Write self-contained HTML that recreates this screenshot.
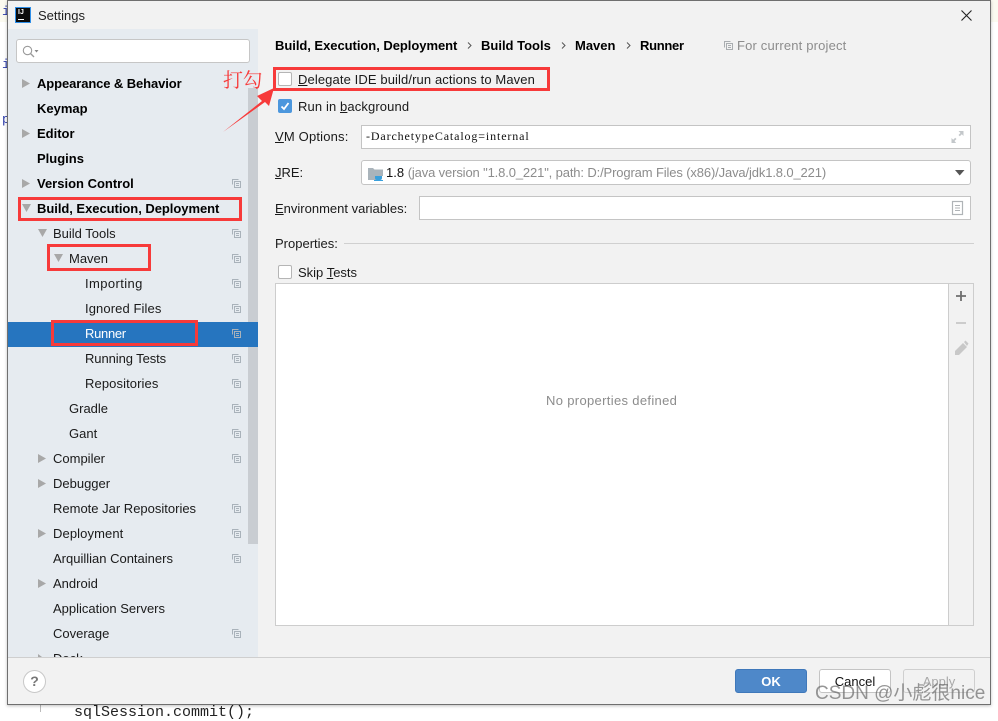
<!DOCTYPE html>
<html><head><meta charset="utf-8">
<style>
html,body{margin:0;padding:0;width:998px;height:712px;overflow:hidden;background:#fff;font-family:"Liberation Sans","Noto Sans CJK SC",sans-serif;font-size:13px;color:#1a1a1a}
div,span.a{position:absolute;box-sizing:border-box}
.t{white-space:nowrap;line-height:16px;height:16px}
.b{font-weight:bold;color:#000}
.u{text-decoration:underline}
.red{border:3px solid #f73a3a}
svg{position:absolute;overflow:visible}
.field{background:#fff;border:1px solid #c4c4c4}
</style></head><body>
<!-- background -->
<div style="left:0;top:0;width:8px;height:22px;background:#fbfaf0"></div>
<div style="left:990px;top:0;width:8px;height:22px;background:#fbfaf0"></div>
<div class="t" style="left:2px;top:4px;color:#2a3aa8;font-family:'Liberation Mono',monospace">i</div>
<div class="t" style="left:2px;top:57px;color:#2a3aa8;font-family:'Liberation Mono',monospace">i</div>
<div class="t" style="left:2px;top:112px;color:#2a3aa8;font-family:'Liberation Mono',monospace">p</div>
<div style="left:40px;top:704px;width:1px;height:8px;background:#bbb"></div>
<div class="t" style="left:74px;top:705px;font-family:'Liberation Mono',monospace;font-size:15px;color:#222">sqlSession.commit();</div>

<!-- dialog -->
<div style="left:7px;top:0;width:984px;height:705px;background:#f2f2f2;border:1px solid #6f6f6f;box-shadow:0 1px 3px rgba(0,0,0,.25)"></div>
<!-- title -->
<div style="left:15px;top:7px;width:16px;height:16px;background:#0b0b0b;border:1px solid #2f8fe8"></div>
<div style="left:18px;top:9px;font:bold 7px/8px 'Liberation Sans',sans-serif;color:#fff">IJ</div>
<div style="left:18px;top:19px;width:6px;height:1px;background:#fff"></div>
<div class="t" style="left:38px;top:8px;color:#222">Settings</div>
<svg style="left:961px;top:10px" width="11" height="11"><path d="M.5.5l10 10M10.500.5l-10 10" stroke="#222" stroke-width="1.100" fill="none"/></svg>

<!-- sidebar -->
<div style="left:8px;top:29px;width:250px;height:628px;background:#e6ebf0"></div>
<div style="left:248px;top:88px;width:10px;height:456px;background:#c9cdd2"></div>
<div style="left:8px;top:322px;width:250px;height:25px;background:#2675bf"></div>
<div style="left:16px;top:39px;width:234px;height:24px;background:#fff;border:1px solid #c6c6c6;border-radius:3px"></div>
<svg style="left:22px;top:45px" width="18" height="13"><circle cx="5.500" cy="5.500" r="4.200" stroke="#9a9a9a" stroke-width="1.100" fill="none"/><path d="M8.500 8.500l3.500 3.500" stroke="#9a9a9a" stroke-width="1.300"/><path d="M12.500 5h4l-2 2.500z" fill="#888"/></svg>

<div class="t b" style="left:37px;top:76px;letter-spacing:-.1px">Appearance &amp; Behavior</div>
<div class="t b" style="left:37px;top:101px">Keymap</div>
<div class="t b" style="left:37px;top:126px">Editor</div>
<div class="t b" style="left:37px;top:151px">Plugins</div>
<div class="t b" style="left:37px;top:176px">Version Control</div>
<div class="t b" style="left:37px;top:201px;letter-spacing:-.04px">Build, Execution, Deployment</div>
<div class="t" style="left:53px;top:226px">Build Tools</div>
<div class="t" style="left:69px;top:251px">Maven</div>
<div class="t" style="left:85px;top:276px;letter-spacing:.4px">Importing</div>
<div class="t" style="left:85px;top:301px;letter-spacing:.1px">Ignored Files</div>
<div class="t" style="left:85px;top:326px;color:#fff;letter-spacing:-.3px">Runner</div>
<div class="t" style="left:85px;top:351px;letter-spacing:-.08px">Running Tests</div>
<div class="t" style="left:85px;top:376px;letter-spacing:.1px">Repositories</div>
<div class="t" style="left:69px;top:401px">Gradle</div>
<div class="t" style="left:69px;top:426px">Gant</div>
<div class="t" style="left:53px;top:451px">Compiler</div>
<div class="t" style="left:53px;top:476px">Debugger</div>
<div class="t" style="left:53px;top:501px">Remote Jar Repositories</div>
<div class="t" style="left:53px;top:526px;letter-spacing:.1px">Deployment</div>
<div class="t" style="left:53px;top:551px">Arquillian Containers</div>
<div class="t" style="left:53px;top:576px">Android</div>
<div class="t" style="left:53px;top:601px">Application Servers</div>
<div class="t" style="left:53px;top:626px">Coverage</div>
<div style="left:53px;top:651px;width:40px;height:6px;overflow:hidden"><div class="t" style="left:0;top:0">Dock</div></div>

<svg style="left:0;top:0" width="60" height="660">
<g fill="#a8a8a8">
<path d="M22 79v9l8-4.500z"/><path d="M22 129v9l8-4.500z"/><path d="M22 179v9l8-4.500z"/>
<path d="M22 204h9l-4.500 8z"/><path d="M38 229h9l-4.500 8z"/><path d="M54 254h9l-4.500 8z"/>
<path d="M38 454v9l8-4.500z"/><path d="M38 479v9l8-4.500z"/><path d="M38 529v9l8-4.500z"/><path d="M38 579v9l8-4.500z"/>
<path d="M38 654v3h4z"/>
</g></svg>

<svg style="left:232px;top:179px" width="10" height="470" fill="none" stroke="#a9b2ba" stroke-width="1">
<defs><g id="c"><path d="M.5 5.500v-5h6M2.500 8.500v-6h6v6z"/><path d="M4 4.500h3M4 6.500h3" /></g></defs>
<use href="#c" y="0"/><use href="#c" y="50"/><use href="#c" y="75"/><use href="#c" y="100"/><use href="#c" y="125"/><use href="#c" y="150"/><use href="#c" y="175"/><use href="#c" y="200"/><use href="#c" y="225"/><use href="#c" y="250"/><use href="#c" y="275"/><use href="#c" y="325"/><use href="#c" y="350"/><use href="#c" y="375"/><use href="#c" y="450"/>
</svg>

<!-- breadcrumbs -->
<div class="t b" style="left:275px;top:38px;letter-spacing:-.04px">Build, Execution, Deployment</div>
<div class="t b" style="left:481px;top:38px">Build Tools</div>
<div class="t b" style="left:575px;top:38px">Maven</div>
<div class="t b" style="left:640px;top:38px;letter-spacing:-.3px">Runner</div>
<svg style="left:467px;top:41px" width="170" height="10" fill="none" stroke="#555" stroke-width="1"><path d="M1 1.500l3 3-3 3M95 1.500l3 3-3 3M160 1.500l3 3-3 3"/></svg>
<svg style="left:724px;top:41px" width="10" height="10" fill="none" stroke="#a9adb0"><path d="M.5 6.500v-6h6M2.500 8.500v-6h6v6z"/><path d="M4 4.500h3M4 6.500h3"/></svg>
<div class="t" style="left:737px;top:38px;color:#8c8c8c;letter-spacing:.17px">For current project</div>

<!-- options -->
<div style="left:278px;top:72px;width:14px;height:14px;background:#fff;border:1px solid #b5b5b5;border-radius:2px"></div>
<div class="t" style="left:298px;top:72px;letter-spacing:.11px"><span class="u">D</span>elegate IDE build/run actions to Maven</div>
<div style="left:278px;top:99px;width:14px;height:14px;background:#4c97dd;border-radius:2px"></div>
<svg style="left:278px;top:99px" width="14" height="14"><path d="M3.500 7.500l2.500 2.500 4.500-6" stroke="#fff" stroke-width="1.800" fill="none"/></svg>
<div class="t" style="left:298px;top:99px;letter-spacing:.12px">Run in <span class="u">b</span>ackground</div>

<div class="t" style="left:275px;top:129px;letter-spacing:.18px"><span class="u">V</span>M Options:</div>
<div class="field" style="left:361px;top:125px;width:610px;height:24px"></div>
<div class="t" style="left:366px;top:128px;font-family:'Liberation Serif',serif;font-size:12px;letter-spacing:.87px;color:#111">-DarchetypeCatalog=internal</div>
<svg style="left:951px;top:130px" width="13" height="14" fill="#c3c7ca"><path d="M7.500 1h5v5l-1.700-1.700-2 2-1.300-1.300 2-2zM.5 13v-5l1.700 1.700 2-2 1.300 1.300-2 2 1.700 2z"/></svg>

<div class="t" style="left:275px;top:165px"><span class="u">J</span>RE:</div>
<div class="field" style="left:361px;top:160px;width:610px;height:25px;border-radius:3px"></div>
<svg style="left:368px;top:167px" width="16" height="14"><path d="M0 1h5l1.500 1.500H15V9H9v4H0z" fill="#aab4bb"/><path d="M7 9h7v2a2 2 0 0 1-2 2H9a2 2 0 0 1-2-2z" fill="#3aa0dc"/><path d="M6 13.500h9" stroke="#3aa0dc"/></svg>
<div class="t" style="left:386px;top:165px;color:#111">1.8 <span style="color:#8c8c8c;letter-spacing:-.135px">(java version "1.8.0_221", path: D:/Program Files (x86)/Java/jdk1.8.0_221)</span></div>
<svg style="left:955px;top:170px" width="10" height="6"><path d="M0 0h9.500L4.700 5.500z" fill="#555"/></svg>

<div class="t" style="left:275px;top:201px"><span class="u">E</span>nvironment variables:</div>
<div class="field" style="left:419px;top:196px;width:552px;height:24px"></div>
<svg style="left:952px;top:201px" width="11" height="14" fill="none" stroke="#b0b4b7"><rect x=".5" y=".5" width="10" height="13" stroke-width="1.200"/><path d="M3 4.500h5M3 7h5M3 9.500h5"/></svg>

<div class="t" style="left:275px;top:236px">Properties:</div>
<div style="left:344px;top:243px;width:630px;height:1px;background:#d0d0d0"></div>

<div style="left:278px;top:265px;width:14px;height:14px;background:#fff;border:1px solid #b5b5b5;border-radius:2px"></div>
<div class="t" style="left:298px;top:265px"><span>Skip</span> <span class="u">T</span>ests</div>

<div style="left:275px;top:283px;width:699px;height:343px;background:#fff;border:1px solid #cdcdcd"></div>
<div style="left:948px;top:284px;width:25px;height:341px;background:#f2f2f2;border-left:1px solid #cdcdcd"></div>
<svg style="left:955px;top:290px" width="14" height="68"><path d="M6 1v10M1 6h10" stroke="#6e6e6e" stroke-width="1.800" fill="none"/><path d="M1 33h10" stroke="#c8c8c8" stroke-width="1.800"/><path d="M0 65v-4l8-8 4 4-8 8z M9 52l1.500-1.500 3 3L12 56z" fill="#c8c8c8"/></svg>
<div class="t" style="left:546px;top:393px;color:#8c8c8c;letter-spacing:.33px">No properties defined</div>

<!-- bottom -->
<div style="left:8px;top:657px;width:982px;height:1px;background:#cfcfcf"></div>
<div style="left:23px;top:670px;width:23px;height:23px;background:#fff;border:1px solid #c8c8c8;border-radius:50%;text-align:center;font:bold 14px/21px 'Liberation Sans',sans-serif;color:#777">?</div>
<div style="left:735px;top:669px;width:72px;height:24px;background:#4e88c9;border:1px solid #3f78ba;border-radius:3px;color:#fff;text-align:center;font-weight:bold;line-height:23px">OK</div>
<div style="left:819px;top:669px;width:72px;height:24px;background:#fff;border:1px solid #c4c4c4;border-radius:3px;color:#111;text-align:center;line-height:24px">Cancel</div>
<div style="left:903px;top:669px;width:72px;height:24px;border:1px solid #cfcfcf;border-radius:3px;color:#a8a8a8;text-align:center;line-height:24px">Apply</div>

<!-- annotations -->
<div class="red" style="left:18px;top:197px;width:224px;height:24px"></div>
<div class="red" style="left:47px;top:244px;width:104px;height:27px"></div>
<div class="red" style="left:51px;top:320px;width:147px;height:26px"></div>
<div class="red" style="left:273px;top:67px;width:277px;height:24px"></div>
<div class="t" style="left:223px;top:68px;height:22px;line-height:22px;font-size:20px;font-family:'Noto Serif CJK SC',serif;color:#f73a3a;letter-spacing:-.5px">打勾</div>
<svg style="left:0;top:0" width="300" height="140"><path d="M223 132L262 101l-5-5 17-8-5 18-4-4z" fill="#f73a3a"/></svg>

<div class="t" style="left:815px;top:683px;height:22px;line-height:22px;font-size:19px;color:rgba(110,110,110,.72);font-family:'Liberation Sans','Noto Sans CJK SC',sans-serif">CSDN @小彪很nice</div>
</body></html>
